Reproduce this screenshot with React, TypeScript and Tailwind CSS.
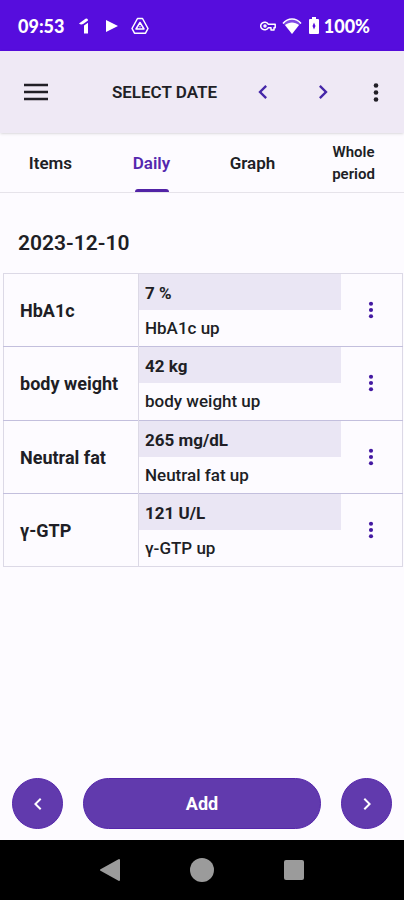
import { MdChevronLeft, MdChevronRight } from "react-icons/md";

const tabs = ["Items", "Daily", "Graph", "Whole period"];

const records = [
  { item: "HbA1c", value: "7 %", memo: "HbA1c up" },
  { item: "body weight", value: "42 kg", memo: "body weight up" },
  { item: "Neutral fat", value: "265 mg/dL", memo: "Neutral fat up" },
  { item: "γ-GTP", value: "121 U/L", memo: "γ-GTP up" },
];

function DotsIcon({ className }: { className: string }) {
  return (
    <svg className={className} viewBox="0 0 6 20" fill="currentColor">
      <circle cx="3" cy="3" r="2.300" />
      <circle cx="3" cy="10" r="2.300" />
      <circle cx="3" cy="17" r="2.300" />
    </svg>
  );
}

function StatusBar() {
  return (
    <div className="flex h-[51px] shrink-0 items-center justify-between bg-[#560ddd] pl-[18px] pr-[34px] font-['Lato',sans-serif] text-lg font-black text-white">
      <div className="flex items-center">
        <span>09:53</span>
        <svg className="ml-[15px] h-4 w-2.5" viewBox="0 0 10 16" fill="currentColor">
          <path d="M0 5.500 6.500 .8Q9 0 9 2.500L4.500 5.800Q2 7.500 0 5.500zM5 7.500 9 4.800V15.500H5z" />
        </svg>
        <svg className="ml-[17px] h-3.5 w-3" viewBox="0 0 12 14" fill="currentColor">
          <path d="M0 1v12l12-6z" />
        </svg>
        <svg className="ml-[13px] h-[18px] w-[18px]" viewBox="0 0 18 18" fill="none" stroke="currentColor" strokeLinejoin="round">
          <path strokeWidth="1.500" d="M6.500 1.500h5L17 11.500 14.500 16.200h-11L1 11.500z" />
          <path strokeWidth="1.500" d="M9 5.500 5 12h8z" />
          <path strokeWidth="1" d="M9 9v1.500" />
        </svg>
      </div>
      <div className="flex items-center">
        <svg className="h-3 w-4" viewBox="0 0 16 12" fill="none" stroke="currentColor" strokeWidth="1.500">
          <path d="M8.200 4.200A4 3.700 0 1 0 8.200 7.800H11V10h3V7.800h1.200V4.200z" strokeLinejoin="round" />
          <circle cx="5" cy="6" r="1" />
        </svg>
        <svg className="ml-1.5 h-[18px] w-5" viewBox="0 0 20 18">
          <path d="M1 6.500C6 .5 14 .5 19 6.500" fill="none" stroke="currentColor" strokeWidth="1.600" />
          <path d="M1 6C6 1 14 1 19 6L10 17z" fill="currentColor" opacity=".25" />
          <path d="M3 8C7 4.500 13 4.500 17 8L10 17z" fill="currentColor" />
        </svg>
        <svg className="ml-[7px] h-[17px] w-2.5" viewBox="0 0 10 17">
          <path d="M3 0h4v2h2q1 0 1 1v13q0 1-1 1H1q-1 0-1-1V3q0-1 1-1h2z" fill="currentColor" />
          <path d="M5 5.500 3.500 9 5 12.500 6.500 9z" fill="#560ddd" />
        </svg>
        <span className="ml-[5px]">100%</span>
      </div>
    </div>
  );
}

function AppBar() {
  return (
    <header className="relative flex h-[82px] shrink-0 items-center bg-[#efe9f5] pl-5 pr-2.5 text-[#211f26] shadow-sm">
      <button type="button" aria-label="Menu" className="flex size-8 items-center justify-center">
        <svg className="h-[18px] w-6" viewBox="0 0 24 18" stroke="currentColor" strokeWidth="2.400">
          <path d="M0 2h24M0 9h24M0 16h24" />
        </svg>
      </button>
      <button type="button" className="ml-auto text-[17px] font-semibold leading-6">
        SELECT DATE
      </button>
      <button type="button" aria-label="Previous date" className="ml-7 flex size-9 items-center justify-center text-[#4527a8]">
        <MdChevronLeft className="size-7" />
      </button>
      <button type="button" aria-label="Next date" className="ml-6 flex size-9 items-center justify-center text-[#4527a8]">
        <MdChevronRight className="size-7" />
      </button>
      <button type="button" aria-label="More options" className="ml-[17px] flex size-9 items-center justify-center">
        <DotsIcon className="h-[21px] w-1.5" />
      </button>
    </header>
  );
}

function Tabs() {
  return (
    <div role="tablist" className="grid h-[60px] shrink-0 grid-cols-4 border-b border-[#e6e3ea]">
      {tabs.map((tab) => {
        const active = tab === "Daily";
        const long = tab.includes(" ");
        return (
          <button
            key={tab}
            type="button"
            role="tab"
            aria-selected={active}
            className={`relative px-6 font-semibold ${long ? "text-[15px] leading-[22px]" : "text-[17px] leading-6"} ${active ? "text-[#5427ae]" : "text-[#201e25]"}`}
          >
            {tab}
            {active && (
              <span className="absolute bottom-0 left-1/2 h-[3px] w-[34px] -translate-x-1/2 rounded-t-full bg-[#5223a6]" />
            )}
          </button>
        );
      })}
    </div>
  );
}

function RecordTable() {
  return (
    <table className="h-[294px] w-full table-fixed border-collapse border border-[#dcd9e6] text-[17px] leading-6">
      <colgroup>
        <col className="w-[135px]" />
        <col />
        <col className="w-[62px]" />
      </colgroup>
      <tbody>
        {records.map(({ item, value, memo }) => (
          <tr key={item} className="border-b border-[#c3bfdd] last:border-[#dcd9e6]">
            <th scope="row" className="border-r border-[#dcd9e6] pl-4 pt-0.5 text-left text-lg font-bold">
              {item}
            </th>
            <td className="p-0">
              <div className="flex h-9 items-center bg-[#eae6f4] pl-1.5 pt-0.5 font-bold">{value}</div>
              <div className="flex h-9 items-center pl-1.5 font-medium">{memo}</div>
            </td>
            <td className="p-0">
              <button type="button" aria-label={`Options for ${item}`} className="flex h-9 w-full items-center justify-center text-[#4419a2]">
                <DotsIcon className="h-[18px] w-1.5" />
              </button>
            </td>
          </tr>
        ))}
      </tbody>
    </table>
  );
}

function BottomActions() {
  return (
    <div className="flex shrink-0 items-center gap-5 px-3 pb-[11px] text-white">
      <button type="button" aria-label="Previous" className="flex size-[51px] shrink-0 items-center justify-center rounded-full border border-[#5526ab] bg-[#613aad]">
        <MdChevronLeft className="size-6" />
      </button>
      <button type="button" className="h-[51px] flex-1 rounded-full border border-[#5526ab] bg-[#613aad] text-lg font-bold">
        Add
      </button>
      <button type="button" aria-label="Next" className="flex size-[51px] shrink-0 items-center justify-center rounded-full border border-[#5526ab] bg-[#613aad]">
        <MdChevronRight className="size-6" />
      </button>
    </div>
  );
}

function NavigationBar() {
  return (
    <nav className="flex h-[60px] shrink-0 items-center justify-center gap-[70px] bg-black text-[#9b9b9b]">
      <button type="button" aria-label="Back">
        <svg className="h-6 w-5" viewBox="0 0 20 24" fill="currentColor" stroke="currentColor" strokeWidth="2" strokeLinejoin="round">
          <path d="M19 2v20L1 12z" />
        </svg>
      </button>
      <button type="button" aria-label="Home" className="size-6 rounded-full bg-[#9b9b9b]" />
      <button type="button" aria-label="Recent apps" className="size-5 rounded-xs bg-[#9b9b9b]" />
    </nav>
  );
}

export default function App() {
  return (
    <div className="flex min-h-screen flex-col bg-[#fdfbff] font-['Roboto',sans-serif] text-[#201e25]">
      <StatusBar />
      <AppBar />
      <Tabs />
      <main className="flex-1 pl-[3px] pr-px pt-9">
        <h1 className="mb-4 pl-[15px] text-[21px] font-semibold leading-7">2023-12-10</h1>
        <RecordTable />
      </main>
      <BottomActions />
      <NavigationBar />
    </div>
  );
}
